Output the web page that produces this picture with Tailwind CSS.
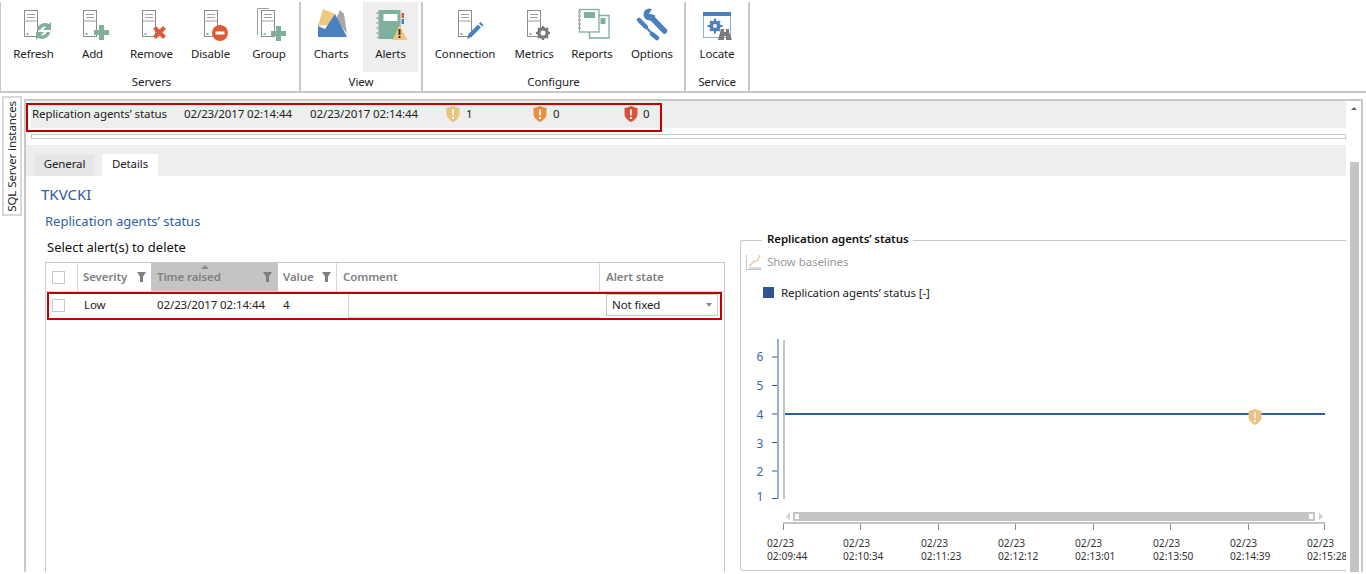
<!DOCTYPE html>
<html lang="en">
<head>
  <meta charset="UTF-8" />
  <title>Alerts</title>
  <script src="https://cdn.jsdelivr.net/npm/@tailwindcss/browser@4"></script>
</head>
<body class="h-[574px] w-[1366px] overflow-hidden bg-white font-['Noto_Sans',sans-serif] text-[11.5px] tracking-[-0.1px] text-[#222]">
  <!-- shared icon parts -->
  <svg class="hidden">
    <symbol id="server" viewBox="0 0 40 36">
      <rect x="10.5" y="2.5" width="13" height="26" fill="#fff" stroke="#8c8c8c"/>
      <path d="M13 6.5h8M13 9.5h8M10 13h14" stroke="#a0a0a0" fill="none"/>
      <rect x="12.5" y="25" width="2" height="2" fill="#7fb09a"/>
    </symbol>
    <symbol id="plus" viewBox="0 0 15 15">
      <path d="M5 0h5v5h5v5h-5v5H5v-5H0V5h5z" fill="#7fb09a"/>
    </symbol>
    <symbol id="shield" viewBox="0 0 14 16">
      <path d="M7 0l6.500 2.300V8c0 3.800-3.500 6.500-6.500 8C4 14.500.5 11.800.5 8V2.300z" fill="currentColor"/>
      <path d="M6 3.500h2l-.3 6h-1.400zM6 11h2v2H6z" fill="#fff"/>
    </symbol>
    <symbol id="filter" viewBox="0 0 9 10">
      <path d="M0 0h9L6 4.500V10H3V4.500z" fill="#7f7f7f"/>
    </symbol>
  </svg>

  <!-- Ribbon -->
  <header class="flex h-[93px] border-b-2 border-[#c8c8c8] pt-[2px]">
    <section class="w-[301px] flex flex-col border-l border-r-2 border-[#c8c8c8] pl-[3px]">
      <div class="flex h-[70px]">
        <button class="w-[59px] flex flex-col items-center">
          <svg class="w-[40px] h-[36px] mt-[6px]" viewBox="0 0 40 36">
            <use href="#server"/>
            <path d="M24.500 22a6.500 6.500 0 0 1 10-4" stroke="#7fb09a" stroke-width="3.500" fill="none"/>
            <path d="M37 14v8h-8z" fill="#7fb09a"/>
            <path d="M34.500 24a6.500 6.500 0 0 1-10 4" stroke="#7fb09a" stroke-width="3.500" fill="none"/>
            <path d="M22 32v-8h8z" fill="#7fb09a"/>
          </svg>
          <span class="mt-[2px] leading-[16px]">Refresh</span>
        </button>
        <button class="w-[59px] flex flex-col items-center">
          <svg class="w-[40px] h-[36px] mt-[6px]" viewBox="0 0 40 36">
            <use href="#server"/>
            <use href="#plus" x="21" y="17" width="15" height="15"/>
          </svg>
          <span class="mt-[2px] leading-[16px]">Add</span>
        </button>
        <button class="w-[59px] flex flex-col items-center">
          <svg class="w-[40px] h-[36px] mt-[6px]" viewBox="0 0 40 36">
            <use href="#server"/>
            <path d="M22.500 19.500l10 10M32.500 19.500l-10 10" stroke="#dc5a38" stroke-width="4" fill="none"/>
          </svg>
          <span class="mt-[2px] leading-[16px]">Remove</span>
        </button>
        <button class="w-[59px] flex flex-col items-center">
          <svg class="w-[40px] h-[36px] mt-[6px]" viewBox="0 0 40 36">
            <use href="#server" x="3"/>
            <circle cx="29" cy="25" r="8" fill="#dc5a38"/>
            <rect x="24.500" y="23.500" width="9" height="3" fill="#fff"/>
          </svg>
          <span class="mt-[2px] leading-[16px]">Disable</span>
        </button>
        <button class="w-[58px] flex flex-col items-center">
          <svg class="w-[40px] h-[36px] mt-[6px]" viewBox="0 0 40 36">
            <path d="M8.500 27V0.500H20" stroke="#a0a0a0" fill="none"/>
            <use href="#server" x="2"/>
            <use href="#plus" x="22" y="18" width="15" height="15"/>
          </svg>
          <span class="mt-[2px] leading-[16px]">Group</span>
        </button>
      </div>
      <div class="text-center leading-[18px] mt-[1px]">Servers</div>
    </section>

    <section class="w-[122px] flex flex-col border-r-2 border-[#c8c8c8]">
      <div class="flex h-[70px]">
        <button class="w-[60px] flex flex-col items-center">
          <svg class="w-[40px] h-[36px] mt-[6px]" viewBox="0 0 40 36">
            <path d="M7 18L12 1l12 5 2 10z" fill="#efc97f"/>
            <path d="M25 11l4-9 4 4 3 20z" fill="#a8a8a8"/>
            <path d="M7 29V18l7 3L24 6l12 23z" fill="#4a80bd"/>
          </svg>
          <span class="mt-[2px] leading-[16px]">Charts</span>
        </button>
        <button class="w-[55px] ml-[2px] flex flex-col items-center bg-[#eeeeee]">
          <svg class="w-[40px] h-[36px] mt-[6px]" viewBox="0 0 40 36">
            <rect x="7.500" y="2" width="22" height="29" fill="#7fb09a"/>
            <path d="M7 4v26" stroke="#b0b0b0" stroke-width="3" stroke-dasharray="2 3"/>
            <rect x="12.500" y="6" width="14" height="7" fill="#fff"/>
            <rect x="30.500" y="5" width="2.500" height="5" fill="#dc5a38"/>
            <rect x="30.500" y="11" width="2.500" height="5" fill="#4a80bd"/>
            <path d="M28.500 17l8 15h-15z" fill="#efc97f"/>
            <path d="M27.500 21h2v6h-2zM27.500 28h2v2h-2z" fill="#333"/>
          </svg>
          <span class="mt-[2px] leading-[16px]">Alerts</span>
        </button>
      </div>
      <div class="text-center leading-[18px] mt-[1px]">View</div>
    </section>

    <section class="w-[263px] flex flex-col border-r-2 border-[#c8c8c8]">
      <div class="flex h-[70px]">
        <button class="w-[84px] flex flex-col items-center">
          <svg class="w-[40px] h-[36px] mt-[6px]" viewBox="0 0 40 36">
            <use href="#server" x="3"/>
            <path d="M22 31l1.500-5L33 16.500l3 3L26.500 29z" fill="#4a80bd"/>
            <path d="M34 15.500l1.500-1.500 3 3-1.500 1.500z" fill="#4a80bd"/>
          </svg>
          <span class="mt-[2px] leading-[16px]">Connection</span>
        </button>
        <button class="w-[54px] flex flex-col items-center">
          <svg class="w-[40px] h-[36px] mt-[6px]" viewBox="0 0 40 36">
            <use href="#server" x="3"/>
            <circle cx="29" cy="25" r="4.500" fill="none" stroke="#7a7a7a" stroke-width="3"/>
            <path d="M29 18v14M22 25h14M24 20l10 10M34 20L24 30" stroke="#7a7a7a" stroke-width="2"/>
            <circle cx="29" cy="25" r="2.500" fill="#fff"/>
          </svg>
          <span class="mt-[2px] leading-[16px]">Metrics</span>
        </button>
        <button class="w-[62px] flex flex-col items-center">
          <svg class="w-[40px] h-[36px] mt-[6px]" viewBox="0 0 40 36">
            <path d="M27 7.500h10v22.500H17.500v-6" fill="#fff" stroke="#7fb09a" stroke-width="1.300"/>
            <rect x="7.500" y="1.500" width="19.500" height="22.500" fill="#fff" stroke="#7fb09a" stroke-width="1.300"/>
            <path d="M7.500 3v20" stroke="#b0b0b0" stroke-width="2.500" stroke-dasharray="2 2"/>
            <rect x="12" y="4" width="11" height="6" fill="#7fb09a"/>
            <rect x="28.500" y="10" width="5" height="6" fill="#7fb09a"/>
          </svg>
          <span class="mt-[2px] leading-[16px]">Reports</span>
        </button>
        <button class="w-[58px] flex flex-col items-center">
          <svg class="w-[40px] h-[36px] mt-[6px]" viewBox="0 0 40 36">
            <circle cx="17.500" cy="6.500" r="6" fill="#4a80bd"/>
            <path d="M17 6l4-7h7l-2 9z" fill="#fff"/>
            <path d="M19 9l13.500 14" stroke="#4a80bd" stroke-width="5.500" stroke-linecap="round"/>
            <path d="M7 12l7 7" stroke="#4a80bd" stroke-width="4.500" stroke-linecap="round"/>
            <path d="M14 19l6 7" stroke="#4a80bd" stroke-width="2"/>
            <path d="M20 26l5 4" stroke="#4a80bd" stroke-width="4.500" stroke-linecap="round"/>
          </svg>
          <span class="mt-[2px] leading-[16px]">Options</span>
        </button>
      </div>
      <div class="text-center leading-[18px] mt-[1px]">Configure</div>
    </section>

    <section class="w-[64px] flex flex-col border-r-2 border-[#c8c8c8]">
      <div class="flex h-[70px]">
        <button class="w-full flex flex-col items-center">
          <svg class="w-[40px] h-[36px] mt-[6px]" viewBox="0 0 40 36">
            <rect x="6.500" y="4.500" width="27" height="25" fill="#fff" stroke="#8db0d8"/>
            <rect x="6" y="4" width="28" height="4" fill="#4a80bd"/>
            <circle cx="18" cy="18" r="4" fill="none" stroke="#4a80bd" stroke-width="3"/>
            <path d="M18 10.500v15M10.500 18h15M13 13l10 10M23 13L13 23" stroke="#4a80bd" stroke-width="2"/>
            <circle cx="18" cy="18" r="2" fill="#fff"/>
            <path d="M24 21h3v3h2v-3h3v3l3 8h-6v-4h-2v4h-6z" fill="#7a7a7a"/>
          </svg>
          <span class="mt-[2px] leading-[16px]">Locate</span>
        </button>
      </div>
      <div class="text-center leading-[18px] mt-[1px]">Service</div>
    </section>
  </header>

  <div class="flex h-[479px]">
    <!-- Side tab -->
    <aside class="w-[24px] pt-[3px] pl-[2px]">
      <div class="w-[20px] h-[120px] border-2 border-[#d8d8d8] flex items-center justify-center">
        <span class="[writing-mode:vertical-rl] rotate-180 whitespace-nowrap">SQL Server instances</span>
      </div>
    </aside>

    <main class="w-[1339px] mt-[6px] border-2 border-b-0 border-[#c8c8c8] flex overflow-hidden">
      <div class="w-[1321px] relative">
        <!-- Alert summary row -->
        <div class="relative h-[27px] ml-[5px] pb-[2px] bg-[#eeeeee] flex items-center">
          <span class="absolute left-[1px]">Replication agents’ status</span>
          <span class="absolute left-[153px]">02/23/2017 02:14:44</span>
          <span class="absolute left-[279px]">02/23/2017 02:14:44</span>
          <svg class="absolute left-[415px] top-[5px] w-[14px] h-[16px] text-[#edc27f]"><use href="#shield"/></svg>
          <span class="absolute left-[435px]">1</span>
          <svg class="absolute left-[502px] top-[5px] w-[14px] h-[16px] text-[#e98f3e]"><use href="#shield"/></svg>
          <span class="absolute left-[522px]">0</span>
          <svg class="absolute left-[593px] top-[5px] w-[14px] h-[16px] text-[#d9553a]"><use href="#shield"/></svg>
          <span class="absolute left-[612px]">0</span>
        </div>
        <div class="absolute left-0 top-[2px] w-[636px] h-[29px] border-[2px] border-[#c00000]"></div>
        <div class="ml-[5px] mt-[6px] h-[5px] border border-[#c8c8c8]"></div>

        <!-- Tabs -->
        <nav class="mt-[6px] h-[31px] bg-[#eeeeee] flex items-end pl-[9px] gap-[8px]">
          <span class="w-[59px] h-[21px] bg-[#e6e6e6] text-center leading-[18px]">General</span>
          <span class="w-[56px] h-[22px] bg-white text-center leading-[20px]">Details</span>
        </nav>

        <h1 class="mt-[8px] ml-[15px] text-[15px] tracking-normal leading-[20px] text-[#2f5da0]">TKVCKI</h1>
        <h2 class="mt-[7px] ml-[19px] text-[13px] tracking-normal leading-[20px] text-[#2f5da0]">Replication agents’ status</h2>

        <div class="flex">
          <!-- Alert list -->
          <div class="ml-[19px] w-[680px] relative">
            <p class="mt-[6px] ml-[2px] text-[13px] tracking-normal leading-[20px] text-[#111]">Select alert(s) to delete</p>
            <div class="mt-[5px] h-[320px] border border-b-0 border-[#c8c8c8]">
              <div class="grid grid-cols-[32px_73px_127px_59px_263px_123px] h-[29px] text-[#7f7f7f] font-semibold border-b border-[#d8d8d8]">
                <div class="border-r border-[#d8d8d8] flex items-center pl-[6px]">
                  <span class="w-[13px] h-[13px] border border-[#c8c8c8]"></span>
                </div>
                <div class="flex items-center justify-between px-[5px]">Severity <svg class="w-[9px] h-[10px]"><use href="#filter"/></svg></div>
                <div class="relative flex items-center justify-between px-[6px] bg-[#c4c4c4]">
                  <span>Time raised</span>
                  <svg class="w-[9px] h-[10px]"><use href="#filter"/></svg>
                  <span class="absolute left-[50px] top-[2px] w-0 h-0 border-x-[4px] border-x-transparent border-b-[4px] border-b-[#8a8a8a]"></span>
                </div>
                <div class="border-r border-[#d8d8d8] flex items-center justify-between px-[5px]">Value <svg class="w-[9px] h-[10px]"><use href="#filter"/></svg></div>
                <div class="border-r border-[#d8d8d8] flex items-center px-[6px]">Comment</div>
                <div class="flex items-center px-[6px]">Alert state</div>
              </div>
              <div class="grid grid-cols-[32px_73px_127px_70px_252px_123px] h-[26px]">
                <div class="flex items-center pl-[6px]"><span class="w-[13px] h-[13px] border border-[#c8c8c8]"></span></div>
                <div class="flex items-center px-[6px]">Low</div>
                <div class="flex items-center px-[6px]">02/23/2017 02:14:44</div>
                <div class="flex items-center px-[5px]">4</div>
                <div class="border-l border-b border-[#d0d0d0] mt-[1px]"></div>
                <div class="pl-[6px] pr-[5px] pt-[2px]">
                  <div class="h-[22px] border border-[#c8c8c8] flex items-center justify-between pl-[5px] pr-[5px]">
                    Not fixed
                    <span class="w-0 h-0 border-x-[3px] border-x-transparent border-t-[4px] border-t-[#8a8a8a]"></span>
                  </div>
                </div>
              </div>
            </div>
            <div class="absolute left-[2px] top-[61px] w-[675px] h-[28px] border-[2px] border-[#c00000]"></div>
          </div>

          <!-- Chart group -->
          <div class="ml-[15px] mt-[9px] w-[606px] h-[331px] relative border border-r-0 border-[#c8c8c8] rounded-l-[3px]">
            <span class="absolute left-[21px] -top-[10px] px-[5px] bg-white font-semibold leading-[16px] text-[#111]">Replication agents’ status</span>
            <div class="flex items-center gap-[5px] pl-[5px] mt-[12px] text-[#999]">
              <svg class="w-[16px] h-[16px]" viewBox="0 0 16 16">
                <path d="M.5 1v14.500H16" stroke="#c8c8c8" fill="none"/>
                <path d="M3 12c3-1 4-5 6-5s2 2 5-6" stroke="#f0c9a8" stroke-width="1.500" fill="none"/>
                <path d="M3 14h12" stroke="#dddddd" stroke-width="2"/>
              </svg>
              Show baselines
            </div>
            <div class="flex items-center gap-[7px] pl-[22px] mt-[14px]">
              <span class="w-[11px] h-[11px] bg-[#2f5597]"></span>
              Replication agents’ status [-]
            </div>

            <svg class="absolute left-0 top-[89px] w-[605px] h-[240px] font-['Noto_Sans',sans-serif]" viewBox="741 330 605 240">
              <g fill="#3d66a8" font-size="12" text-anchor="middle">
                <text x="760" y="361">6</text>
                <text x="760" y="390">5</text>
                <text x="760" y="419">4</text>
                <text x="760" y="448">3</text>
                <text x="760" y="476">2</text>
                <text x="760" y="501">1</text>
              </g>
              <rect x="777" y="339" width="2" height="160" fill="#96afd6"/>
              <path d="M772 357h5M772 385.500h5M772 414h5M772 442.500h5M772 471h5M772 498.500h5" stroke="#2f5597"/>
              <rect x="783" y="340" width="2" height="159" fill="#c4c4c4"/>
              <rect x="785" y="413" width="540" height="2" fill="#2f5da0"/>
              <use href="#shield" x="1248" y="409" width="14" height="16" class="text-[#edc27f]"/>

              <rect x="793" y="512" width="522" height="9" fill="#c4c4c4"/>
              <rect x="795" y="514" width="4" height="5" fill="#fff"/>
              <rect x="1309" y="514" width="4" height="5" fill="#fff"/>
              <path d="M790 512.500v8l-4-4z" fill="#d0d0d0"/>
              <path d="M1319 512.500v8l4-4z" fill="#d0d0d0"/>
              <rect x="783" y="522" width="542" height="2" fill="#c4c4c4"/>
              <path d="M783.500 524v6M860.500 524v6M938.500 524v6M1015.500 524v6M1093.500 524v6M1170.500 524v6M1248.500 524v6M1324.500 524v6" stroke="#8a8a8a"/>
              <g fill="#333" font-size="10.200" letter-spacing="0">
                <text x="767" y="547">02/23</text><text x="767" y="560">02:09:44</text>
                <text x="843" y="547">02/23</text><text x="843" y="560">02:10:34</text>
                <text x="921" y="547">02/23</text><text x="921" y="560">02:11:23</text>
                <text x="998" y="547">02/23</text><text x="998" y="560">02:12:12</text>
                <text x="1075" y="547">02/23</text><text x="1075" y="560">02:13:01</text>
                <text x="1153" y="547">02/23</text><text x="1153" y="560">02:13:50</text>
                <text x="1230" y="547">02/23</text><text x="1230" y="560">02:14:39</text>
                <text x="1307" y="547">02/23</text><text x="1307" y="560">02:15:28</text>
              </g>
            </svg>
          </div>
        </div>
      </div>

      <!-- Vertical scrollbar -->
      <div class="w-[16px] flex flex-col items-center">
        <span class="mt-[6px] w-0 h-0 border-x-[3px] border-x-transparent border-b-[3px] border-b-[#666]"></span>
        <div class="ml-[1px] mt-[52px] w-[9px] flex-1 bg-[#c4c4c4]"></div>
      </div>
    </main>
  </div>
</body>
</html>
